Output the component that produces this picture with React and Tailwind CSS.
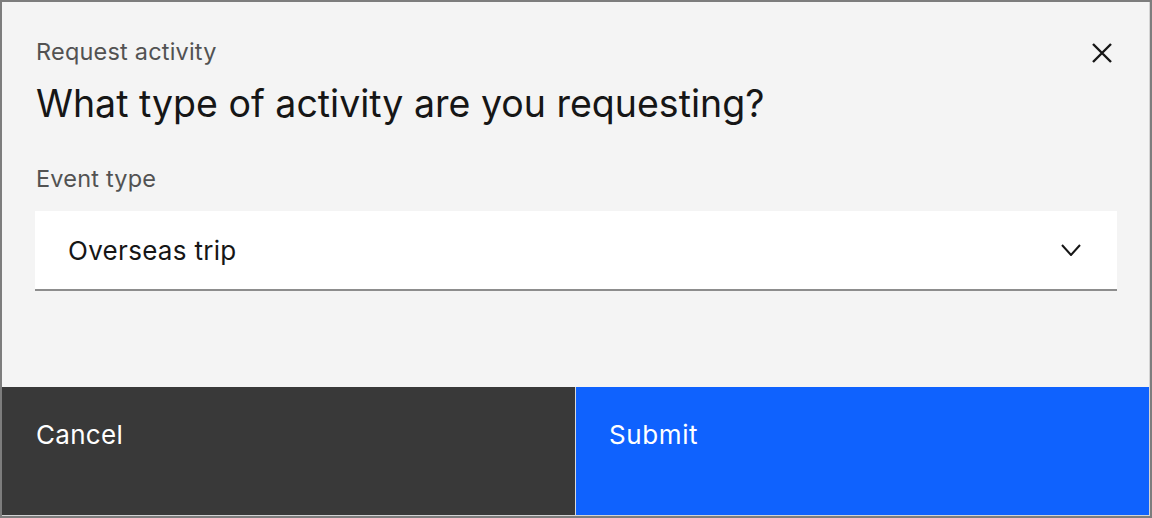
import React from "react";

export default function App() {
  return (
    <div className="w-[1152px] h-[518px] bg-[#7d7d7d] p-[2px] font-['Inter',sans-serif]">
      <div className="w-[1148px] h-[514px] bg-[#f4f4f4] flex flex-col border-r border-b border-[#d4d4d4]">
        <div className="flex-1 flex flex-col px-[34px] pt-[35px]">
          <div className="flex items-start justify-between">
            <div className="flex flex-col">
              <div className="text-[23.5px] leading-[30px] text-[#525252] tracking-[0.2px]">Request activity</div>
              <div className="mt-[15px] text-[37.5px] leading-[44px] text-[#161616]">What type of activity are you requesting?</div>
            </div>
            <svg width="20" height="20" viewBox="0 0 20 20" className="mt-[6px] mr-[3px]">
              <path d="M1 1 L19 19 M19 1 L1 19" stroke="#161616" strokeWidth="2.4" fill="none" />
            </svg>
          </div>
          <div className="mt-[38px] text-[23.5px] leading-[30px] text-[#525252] tracking-[0.2px]">Event type</div>
          <div className="mt-[17px] -ml-px w-[1082px] h-[80px] bg-white border-b-2 border-[#8d8d8d] flex items-center justify-between pl-[33px] pr-[36px]">
            <span className="text-[26px] text-[#161616] tracking-[0.3px]">Overseas trip</span>
            <svg width="20" height="12" viewBox="0 0 20 12">
              <path d="M1 1 L10 11 L19 1" stroke="#161616" strokeWidth="2" fill="none" />
            </svg>
          </div>
        </div>
        <div className="h-[128px] flex">
          <div className="w-[573px] bg-[#393939] text-white text-[26px] pl-[34px] pt-[30px] leading-[36px] tracking-[0.3px]">Cancel</div>
          <div className="w-[1px] bg-[#d8d8d8]" />
          <div className="flex-1 bg-[#0f62fe] text-white text-[26px] pl-[33px] pt-[30px] leading-[36px] tracking-[0.6px]">Submit</div>
        </div>
      </div>
    </div>
  );
}
